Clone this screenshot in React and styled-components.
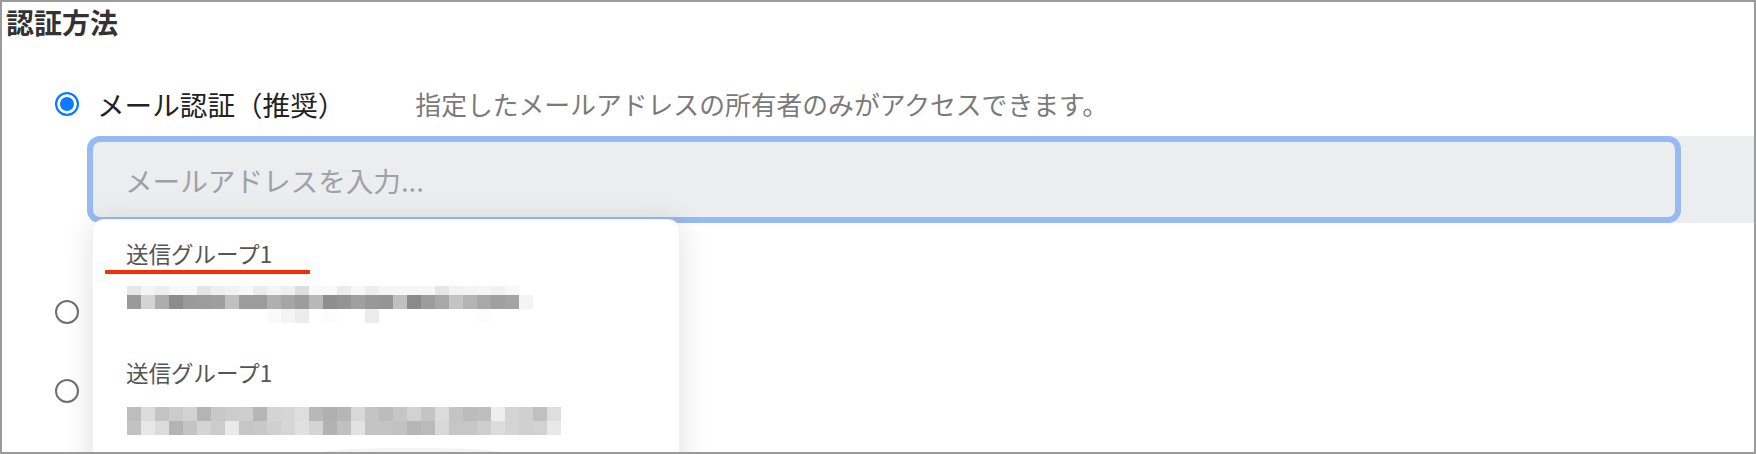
import React from 'react';
import styled, { createGlobalStyle } from 'styled-components';

const GlobalStyle = createGlobalStyle`
  html, body {
    margin: 0;
    padding: 0;
    background: #ffffff;
  }
  body {
    font-family: "Noto Sans CJK JP", "Noto Sans", sans-serif;
  }
`;

const Frame = styled.div`
  width: 1756px;
  height: 454px;
  box-sizing: border-box;
  border: 2px solid #9b9b9b;
  background: #ffffff;
  overflow: hidden;
  font-family: "Noto Sans CJK JP", "Noto Sans", sans-serif;
`;

const Title = styled.h2`
  margin: 0;
  padding: 2px 0 0 4px;
  font-size: 28px;
  line-height: 36px;
  font-weight: 700;
  color: #333333;
`;

const Options = styled.div`
  display: flex;
  flex-direction: column;
  padding-left: 53px;
  margin-top: 44px;
`;

const OptionRow = styled.div`
  display: flex;
  align-items: center;
  height: 40px;
  margin-top: ${(p) => p.$gap || 0}px;
`;

const RadioMark = styled.span`
  flex: 0 0 auto;
  width: 24px;
  height: 24px;
  box-sizing: border-box;
  border-radius: 50%;
  border: 2px solid ${(p) => (p.$checked ? '#0a7aff' : '#707070')};
  background: ${(p) => (p.$checked ? '#0a7aff' : '#ffffff')};
  box-shadow: ${(p) => (p.$checked ? 'inset 0 0 0 3px #ffffff' : 'none')};
`;

const Label = styled.span`
  margin-left: 18px;
  font-size: 27.6px;
  line-height: 40px;
  color: #222222;
`;

const Desc = styled.span`
  margin-left: 70px;
  font-size: 25.8px;
  line-height: 40px;
  color: #7a7a7a;
`;

const Band = styled.div`
  position: relative;
  display: flex;
  margin: 12px 0 0 32px;
  height: 87px;
  background: #ecedef;
  border-radius: 13px 0 0 13px;
`;

const FieldInput = styled.input`
  width: 1594px;
  height: 87px;
  box-sizing: border-box;
  border: 6px solid #97b9f4;
  border-radius: 13px;
  background: #ecedef;
  padding: 0 0 0 32px;
  margin: 0;
  outline: none;
  font-family: "Noto Sans CJK JP", "Noto Sans", sans-serif;
  font-size: 27.6px;
  color: #333333;

  &::placeholder {
    color: #9ca2aa;
  }
`;

const Dropdown = styled.div`
  position: absolute;
  top: 83px;
  left: 5px;
  z-index: 2;
  width: 588px;
  height: 280px;
  box-sizing: border-box;
  padding: 18px 0 0 33px;
  background: #ffffff;
  border-radius: 12px;
  border: 1px solid rgba(0, 0, 0, 0.05);
  box-shadow: 0 4px 30px rgba(0, 0, 0, 0.13);
  display: flex;
  flex-direction: column;
  align-items: flex-start;
`;

const GroupName = styled.div`
  margin-top: ${(p) => p.$gap || 0}px;
  font-size: 22.5px;
  line-height: 30px;
  color: #555555;
`;

const Marker = styled.div`
  position: absolute;
  left: 12px;
  top: 50px;
  width: 205px;
  height: 4px;
  background: #ff2a00;
`;

const MosaicBox = styled.svg`
  display: block;
  margin-top: ${(p) => p.$gap || 0}px;
  margin-left: 1px;
`;

const MoreHint = styled.div`
  margin: 13px 0 0 178px;
  width: 214px;
  height: 24px;
  border-radius: 40% 40% 0 0;
  background: #f4f4f4;
`;

const mosaicA = [
  { y: 5, h: 9, cells: ['e6', 'f4', 'ee', 'f8', 'f8', 'e4', 'ef', 'f2', 'f8', 'ec', 'f4', 'ef', 'de', 'f8', 'fa', 'ec', 'f8', 'ee', 'f6', 'f6', 'f6', 'f6', 'e6', 'f2', 'f4', 'f6', 'f2', 'f8'] },
  { y: 14, h: 14, cells: ['9a', 'd4', 'ad', '8c', '9a', '9c', '9e', 'c0', '9c', '9c', 'b0', 'a6', '9c', 'b8', '8e', '94', 'a0', '98', '95', 'c0', '8a', '9c', 'a8', 'c4', 'b4', 'a8', 'a0', 'a4', 'f4'] },
  { y: 28, h: 14, cells: ['ff', 'ff', 'ff', 'ff', 'ff', 'ff', 'ff', 'ff', 'ff', 'ff', 'fa', 'f4', 'ec', 'ff', 'fc', 'ff', 'ff', 'ec', 'ff', 'ff', 'ff', 'ff', 'ff', 'ff', 'ff', 'fc', 'ff', 'ff'] },
];

const mosaicB = [
  { y: 0, h: 14, cells: ['bd', 'dc', 'c4', 'cc', 'd2', 'b4', 'c8', 'cc', 'ce', 'b6', 'd4', 'd6', 'de', 'b8', 'b0', 'b6', 'd8', 'c4', 'bc', 'c6', 'd2', 'c4', 'dc', 'c4', 'bc', 'be', 'ee', 'd4', 'd0', 'c0', 'de'] },
  { y: 14, h: 14, cells: ['c2', 'e8', 'dc', 'b4', 'c4', 'd4', 'cc', 'ea', 'c6', 'c8', 'd0', 'd6', 'e0', 'd4', 'b2', 'c0', 'e2', 'c4', 'c4', 'c2', 'b6', 'ba', 'd8', 'c6', 'c6', 'ce', 'dc', 'd4', 'd0', 'd2', 'e8'] },
];

const Mosaic = ({ rows, height, gap }) => {
  const cols = Math.max(...rows.map((r) => r.cells.length));
  return (
    <MosaicBox $gap={gap} width={cols * 14} height={height} viewBox={`0 0 ${cols * 14} ${height}`}>
      {rows.map((row, ri) =>
        row.cells.map((c, ci) => (
          <rect key={`${ri}-${ci}`} x={ci * 14} y={row.y} width={14} height={row.h} fill={`#${c}${c}${c}`} />
        ))
      )}
    </MosaicBox>
  );
};

const App = () => {
  return (
    <Frame>
      <GlobalStyle />
      <Title>認証方法</Title>
      <Options>
        <OptionRow>
          <RadioMark $checked />
          <Label>メール認証（推奨）</Label>
          <Desc>指定したメールアドレスの所有者のみがアクセスできます。</Desc>
        </OptionRow>
        <Band>
          <FieldInput placeholder="メールアドレスを入力..." readOnly />
          <Dropdown>
            <Marker />
            <GroupName>送信グループ1</GroupName>
            <Mosaic rows={mosaicA} height={42} gap={13} />
            <GroupName $gap={34}>送信グループ1</GroupName>
            <Mosaic rows={mosaicB} height={28} gap={20} />
            <MoreHint />
          </Dropdown>
        </Band>
        {/* labels of the other two options sit under the open dropdown */}
        <OptionRow $gap={69}>
          <RadioMark />
        </OptionRow>
        <OptionRow $gap={39}>
          <RadioMark />
        </OptionRow>
      </Options>
    </Frame>
  );
};

export default App;
